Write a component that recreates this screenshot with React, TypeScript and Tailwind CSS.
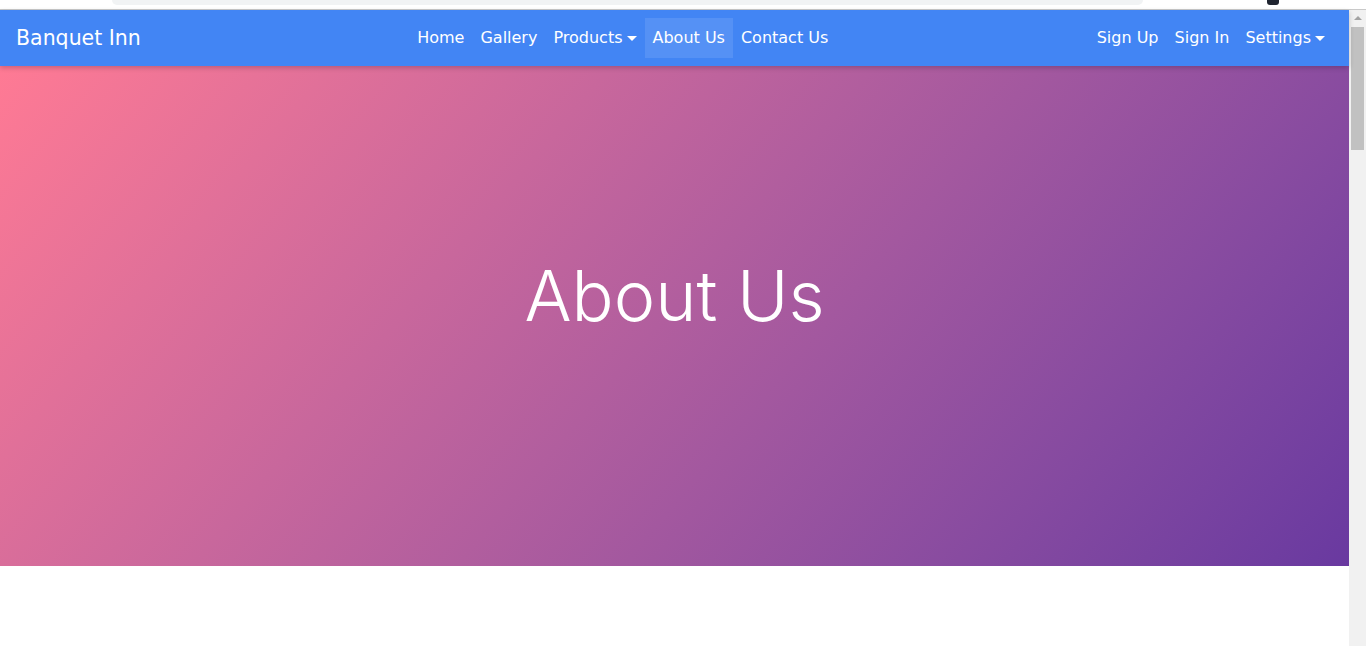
import { FC } from "react";

const Caret: FC = () => (
  <span className="ml-[4px] inline-block align-[3px] border-x-[5px] border-t-[5px] border-x-transparent border-t-white" />
);

const NavLink: FC<{ label: string; active?: boolean; caret?: boolean }> = ({ label, active, caret }) => (
  <a
    href="#"
    className={
      active
        ? "flex h-10 items-center px-2 bg-white/10 text-white"
        : "flex h-10 items-center px-2 text-white"
    }
  >
    {label}
    {caret && <Caret />}
  </a>
);

const App: FC = () => {
  return (
    <div className="h-[646px] overflow-hidden bg-white font-['DejaVu_Sans',sans-serif]">
      {/* browser chrome remnant */}
      <div className="relative h-[10px] border-b border-[#c9c9c9] bg-white">
        <div className="absolute left-[112px] top-0 h-[5px] w-[1031px] rounded-b-[8px] bg-[#f1f3f4]" />
        <div className="absolute left-[1267px] top-0 h-[5px] w-[12px] rounded-b-[3px] bg-[#1f2430]" />
      </div>

      <div className="flex h-[636px]">
        <div className="flex flex-1 flex-col">
          <nav className="relative z-10 flex h-14 items-center bg-[#4285f4] px-4 text-base shadow-[0_2px_5px_rgba(0,0,0,0.2)]">
            <a href="#" className="mr-4 text-[20.5px] text-white">
              Banquet Inn
            </a>
            <div className="mx-auto flex items-center">
              <NavLink label="Home" />
              <NavLink label="Gallery" />
              <NavLink label="Products" caret />
              <NavLink label="About Us" active />
              <NavLink label="Contact Us" />
            </div>
            <div className="flex items-center">
              <NavLink label="Sign Up" />
              <NavLink label="Sign In" />
              <NavLink label="Settings" caret />
            </div>
          </nav>

          <section className="flex h-[500px] items-center justify-center bg-linear-130 from-[#ff7a94] to-[#6939a0] pb-10">
            <h1 className="font-['Inter',sans-serif] text-[70px] font-light leading-none text-white">About Us</h1>
          </section>
        </div>

        {/* scrollbar */}
        <div className="flex w-[17px] flex-col items-center bg-[#f1f1f1]">
          <div className="mt-[6px] h-0 w-0 border-x-[4px] border-b-[4px] border-x-transparent border-b-[#a3a3a3]" />
          <div className="mt-[7px] h-[123px] w-[13px] bg-[#c1c1c1]" />
        </div>
      </div>
    </div>
  );
};

export default App;
